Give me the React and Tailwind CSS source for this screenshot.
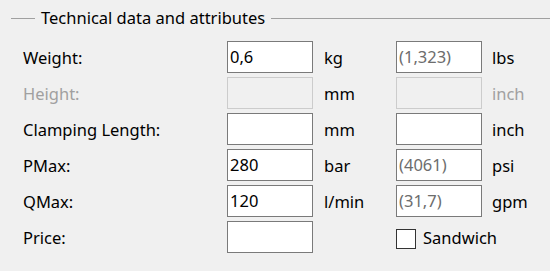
const rows = [
  { label: 'Weight:', v1: '0,6', u1: 'kg', v2: '(1,323)', u2: 'lbs' },
  { label: 'Height:', disabled: true, u1: 'mm', u2: 'inch' },
  { label: 'Clamping Length:', u1: 'mm', u2: 'inch' },
  { label: 'PMax:', v1: '280', u1: 'bar', v2: '(4061)', u2: 'psi' },
  { label: 'QMax:', v1: '120', u1: 'l/min', v2: '(31,7)', u2: 'gpm' },
];

function Box({ value, disabled, muted }) {
  return (
    <div
      className={`h-[32px] w-[86px] border px-[2px] flex items-center ${
        disabled ? 'border-[#cccccc] bg-[#f0f0f0]' : 'border-[#7a7a7a] bg-white'
      } ${muted ? 'text-[#6d6d6d]' : 'text-black'}`}
    >
      {value}
    </div>
  );
}

export default function App() {
  return (
    <div
      className="w-[550px] h-[271px] bg-[#f0f0f0] text-black text-[16.5px] overflow-hidden"
      style={{ fontFamily: '"Noto Sans", "Segoe UI", sans-serif' }}
    >
      {/* group header */}
      <div className="flex items-center pt-[6px] h-[30px]">
        <div className="ml-[11px] w-[24px] h-px bg-[#a0a0a0]" />
        <span className="px-[6px] leading-none">Technical data and attributes</span>
        <div className="flex-1 h-px bg-[#a0a0a0]" />
      </div>

      <div className="mt-[11px] ml-[23px] grid grid-cols-[204px_86px_83px_86px_1fr] gap-y-[4px]">
        {rows.map((r) => (
          <div key={r.label} className="contents">
            <div className={`flex items-center pt-[3px] ${r.disabled ? 'text-[#a0a0a0]' : ''}`}>{r.label}</div>
            <Box value={r.v1} disabled={r.disabled} />
            <div className="flex items-center pl-[11px] pt-[3px]">{r.u1}</div>
            <Box value={r.v2} disabled={r.disabled} muted />
            <div className={`flex items-center pl-[10px] pt-[3px] ${r.disabled ? 'text-[#a0a0a0]' : ''}`}>{r.u2}</div>
          </div>
        ))}
        <div className="flex items-center pt-[3px]">Price:</div>
        <Box />
        <div />
        <label className="col-span-2 flex items-center pt-[3px]">
          <span className="w-[20px] h-[20px] border border-[#333333] bg-white" />
          <span className="ml-[7px]">Sandwich</span>
        </label>
      </div>
    </div>
  );
}
